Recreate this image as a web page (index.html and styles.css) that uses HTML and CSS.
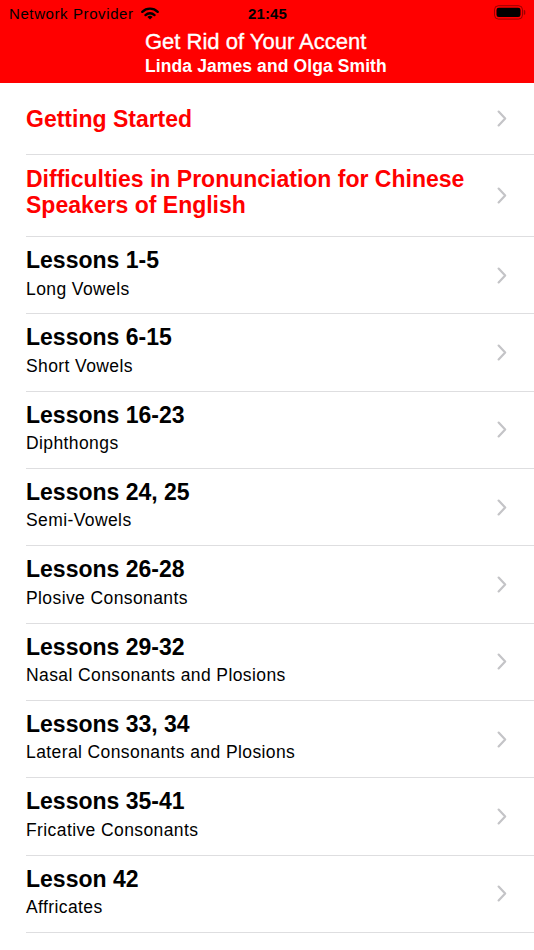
FILE: index.html
```html
<!DOCTYPE html>
<html>
<head>
<meta charset="utf-8">
<link rel="stylesheet" href="styles.css">
</head>
<body>
<header class="header">
  <div class="status">
    <div class="status-left">
      <span class="carrier">Network Provider</span>
      <svg class="wifi" width="18" height="13" viewBox="0 0 18 13">
        <path d="M1.3 4.8 A11 11 0 0 1 16.7 4.8" fill="none" stroke="#000" stroke-width="2.4" stroke-linecap="round"/>
        <path d="M4.5 8.1 A6.4 6.4 0 0 1 13.5 8.1" fill="none" stroke="#000" stroke-width="2.4" stroke-linecap="round"/>
        <path d="M9 12.6 L6.4 10 A3.6 3.6 0 0 1 11.6 10 Z" fill="#000"/>
      </svg>
    </div>
    <div class="time">21:45</div>
    <div class="status-right">
      <svg class="battery" width="32" height="15" viewBox="0 0 32 15">
        <rect x="0.5" y="0.7" width="28" height="13.4" rx="4" fill="none" stroke="rgba(0,0,0,0.4)" stroke-width="1"/>
        <rect x="2.5" y="2.7" width="24" height="9.4" rx="2.3" fill="#000"/>
        <path d="M29.8 5 L30.3 5 A1.4 1.4 0 0 1 31.3 6.4 L31.3 8.4 A1.4 1.4 0 0 1 30.3 9.8 L29.8 9.8 Z" fill="rgba(0,0,0,0.4)"/>
      </svg>
    </div>
  </div>
  <div class="nav">
    <div class="nav-title">Get Rid of Your Accent</div>
    <div class="nav-sub">Linda James and Olga Smith</div>
  </div>
</header>

<ul class="list">
  <li class="row row-single">
    <div class="text"><div class="title red">Getting Started</div></div>
    <svg class="chev" width="10" height="17" viewBox="0 0 10 17"><path d="M1.6 1.6 L8.2 8.5 L1.6 15.4" fill="none" stroke="#c4c4c7" stroke-width="2.2" stroke-linecap="round" stroke-linejoin="round"/></svg>
  </li>
  <li class="row row-double">
    <div class="text"><div class="title red wrap">Difficulties in Pronunciation for Chinese Speakers of English</div></div>
    <svg class="chev" width="10" height="17" viewBox="0 0 10 17"><path d="M1.6 1.6 L8.2 8.5 L1.6 15.4" fill="none" stroke="#c4c4c7" stroke-width="2.2" stroke-linecap="round" stroke-linejoin="round"/></svg>
  </li>
  <li class="row lesson">
    <div class="text"><div class="title">Lessons 1-5</div><div class="sub">Long Vowels</div></div>
    <svg class="chev" width="10" height="17" viewBox="0 0 10 17"><path d="M1.6 1.6 L8.2 8.5 L1.6 15.4" fill="none" stroke="#c4c4c7" stroke-width="2.2" stroke-linecap="round" stroke-linejoin="round"/></svg>
  </li>
  <li class="row lesson">
    <div class="text"><div class="title">Lessons 6-15</div><div class="sub">Short Vowels</div></div>
    <svg class="chev" width="10" height="17" viewBox="0 0 10 17"><path d="M1.6 1.6 L8.2 8.5 L1.6 15.4" fill="none" stroke="#c4c4c7" stroke-width="2.2" stroke-linecap="round" stroke-linejoin="round"/></svg>
  </li>
  <li class="row lesson">
    <div class="text"><div class="title">Lessons 16-23</div><div class="sub">Diphthongs</div></div>
    <svg class="chev" width="10" height="17" viewBox="0 0 10 17"><path d="M1.6 1.6 L8.2 8.5 L1.6 15.4" fill="none" stroke="#c4c4c7" stroke-width="2.2" stroke-linecap="round" stroke-linejoin="round"/></svg>
  </li>
  <li class="row lesson">
    <div class="text"><div class="title">Lessons 24, 25</div><div class="sub">Semi-Vowels</div></div>
    <svg class="chev" width="10" height="17" viewBox="0 0 10 17"><path d="M1.6 1.6 L8.2 8.5 L1.6 15.4" fill="none" stroke="#c4c4c7" stroke-width="2.2" stroke-linecap="round" stroke-linejoin="round"/></svg>
  </li>
  <li class="row lesson">
    <div class="text"><div class="title">Lessons 26-28</div><div class="sub">Plosive Consonants</div></div>
    <svg class="chev" width="10" height="17" viewBox="0 0 10 17"><path d="M1.6 1.6 L8.2 8.5 L1.6 15.4" fill="none" stroke="#c4c4c7" stroke-width="2.2" stroke-linecap="round" stroke-linejoin="round"/></svg>
  </li>
  <li class="row lesson">
    <div class="text"><div class="title">Lessons 29-32</div><div class="sub">Nasal Consonants and Plosions</div></div>
    <svg class="chev" width="10" height="17" viewBox="0 0 10 17"><path d="M1.6 1.6 L8.2 8.5 L1.6 15.4" fill="none" stroke="#c4c4c7" stroke-width="2.2" stroke-linecap="round" stroke-linejoin="round"/></svg>
  </li>
  <li class="row lesson">
    <div class="text"><div class="title">Lessons 33, 34</div><div class="sub">Lateral Consonants and Plosions</div></div>
    <svg class="chev" width="10" height="17" viewBox="0 0 10 17"><path d="M1.6 1.6 L8.2 8.5 L1.6 15.4" fill="none" stroke="#c4c4c7" stroke-width="2.2" stroke-linecap="round" stroke-linejoin="round"/></svg>
  </li>
  <li class="row lesson">
    <div class="text"><div class="title">Lessons 35-41</div><div class="sub">Fricative Consonants</div></div>
    <svg class="chev" width="10" height="17" viewBox="0 0 10 17"><path d="M1.6 1.6 L8.2 8.5 L1.6 15.4" fill="none" stroke="#c4c4c7" stroke-width="2.2" stroke-linecap="round" stroke-linejoin="round"/></svg>
  </li>
  <li class="row lesson">
    <div class="text"><div class="title">Lesson 42</div><div class="sub">Affricates</div></div>
    <svg class="chev" width="10" height="17" viewBox="0 0 10 17"><path d="M1.6 1.6 L8.2 8.5 L1.6 15.4" fill="none" stroke="#c4c4c7" stroke-width="2.2" stroke-linecap="round" stroke-linejoin="round"/></svg>
  </li>
</ul>
</body>
</html>
```

FILE: styles.css
```css
html, body {
  margin: 0;
  padding: 0;
  background: #ffffff;
  font-family: "Liberation Sans", Arial, sans-serif;
  color: #000;
  overflow: hidden;
}

.header {
  background: #ff0000;
  height: 83px;
  box-sizing: border-box;
}

.status {
  display: grid;
  grid-template-columns: 1fr auto 1fr;
  align-items: start;
  height: 28px;
  padding: 0 8px 0 9px;
  box-sizing: border-box;
}

.status-left {
  display: flex;
  align-items: flex-start;
  padding-top: 5px;
}

.carrier {
  font-size: 15px;
  line-height: 18px;
  letter-spacing: 0.6px;
}

.wifi {
  margin-left: 7px;
  margin-top: 2px;
}

.time {
  font-size: 15px;
  line-height: 18px;
  font-weight: 700;
  padding-top: 5px;
  letter-spacing: 0.1px;
}

.status-right {
  display: flex;
  justify-content: flex-end;
  padding-top: 5px;
}

.battery {
  display: block;
}

.nav {
  padding-left: 145px;
  color: #fff;
}

.nav-title {
  font-size: 22px;
  line-height: 26px;
  padding-top: 1px;
  -webkit-text-stroke: 0.35px #fff;
}

.nav-sub {
  font-size: 17.5px;
  line-height: 22px;
  font-weight: 700;
  letter-spacing: 0.1px;
}

.list {
  list-style: none;
  margin: 0;
  padding: 0;
}

.row {
  display: flex;
  align-items: center;
  margin-left: 26px;
  padding-right: 27px;
  border-bottom: 1px solid #dedee0;
  box-sizing: border-box;
}

.row-single {
  height: 72px;
}

.row-single .text {
  padding-top: 2px;
}

.row-double {
  height: 82px;
}

.lesson {
  height: 77.33px;
}

.text {
  flex: 1;
}

.row-double .text,
.lesson .text {
  align-self: flex-start;
}

.row-double .text {
  padding-top: 10.5px;
}

.lesson .text {
  padding-top: 10px;
}

.title {
  font-size: 23px;
  line-height: 27px;
  font-weight: 700;
}

.title.wrap {
  line-height: 26.5px;
  padding-right: 20px;
}

.red {
  color: #ff0000;
}

.sub {
  font-size: 17.5px;
  line-height: 22px;
  letter-spacing: 0.4px;
  margin-top: 3.5px;
}

.chev {
  flex: none;
  display: block;
}
```
